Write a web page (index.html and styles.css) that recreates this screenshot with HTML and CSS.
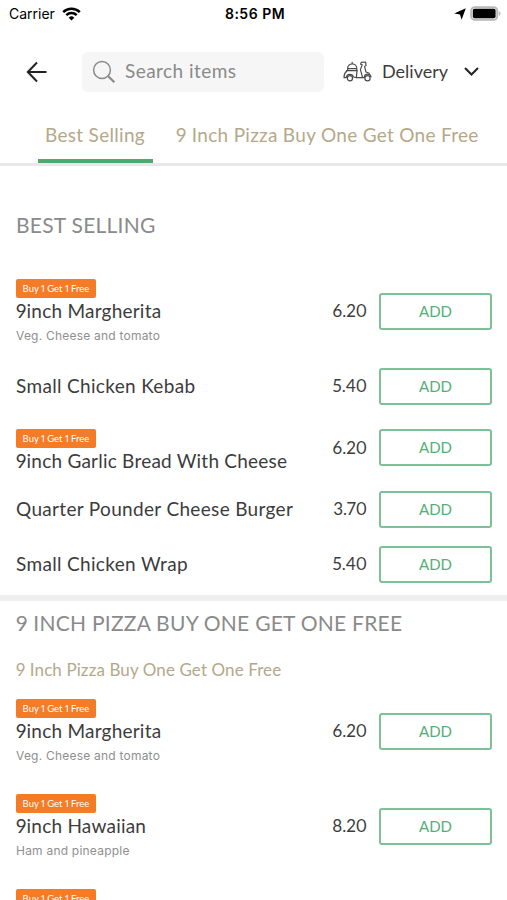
FILE: index.html
```html
<!DOCTYPE html>
<html lang="en">
<head>
    <meta charset="UTF-8">
    <meta name="viewport" content="width=device-width, initial-scale=1.0">
    <title>Menu</title>
    <link rel="stylesheet" href="styles.css">
</head>
<body>
    <div class="screen">
        <div class="status-bar">
            <div class="carrier">
                <span>Carrier</span>
                <svg width="19" height="14" viewBox="0 0 19 14">
                    <path d="M9.5 13.6 6.7 10.7a4 4 0 0 1 5.6 0z" fill="#000"/>
                    <path d="M4.3 8.2a7.4 7.4 0 0 1 10.4 0" fill="none" stroke="#000" stroke-width="2.5"/>
                    <path d="M1.2 5.1a11.8 11.8 0 0 1 16.6 0" fill="none" stroke="#000" stroke-width="2.5"/>
                </svg>
            </div>
            <div class="time">8:56 PM</div>
            <div class="indicators">
                <svg width="12" height="12" viewBox="0 0 12 12"><path d="M11.8.2 7.6 11.8 6 6.4.2 5.4z" fill="#000"/></svg>
                <svg width="31" height="15" viewBox="0 0 31 15">
                    <rect x="1.2" y="1.2" width="26" height="12.6" rx="3.6" fill="#fff" stroke="#b8b8b8" stroke-width="2"/>
                    <rect x="2.8" y="2.8" width="22.8" height="9.4" rx="1.8" fill="#000"/>
                    <path d="M28.8 5v5q1.7-.8 1.7-2.5T28.8 5z" fill="#b8b8b8"/>
                </svg>
            </div>
        </div>

        <div class="header">
            <a class="back" href="#">
                <svg width="22" height="22" viewBox="0 0 22 22"><path d="M20.5 11H2M11 1.5 1.8 11l9.2 9.5" fill="none" stroke="#222" stroke-width="2"/></svg>
            </a>
            <div class="search">
                <svg width="24" height="24" viewBox="0 0 24 24" fill="none" stroke="#8a8a8a">
                    <circle cx="10" cy="10" r="8.4" stroke-width="1.5"/>
                    <path d="m16.2 16.2 6.2 6" stroke-width="2.2"/>
                </svg>
                <span>Search items</span>
            </div>
            <div class="delivery">
                <svg width="29" height="21" viewBox="0 0 29 21" fill="none" stroke="#4a4a4a" stroke-width="1.2" stroke-linejoin="round" stroke-linecap="round">
                    <path d="M4.6 9.6V7.4a4.6 4.6 0 0 1 9.2 0v2.2M9.2 2.8V1.4M4.6 7.6h9.2M3.6 9.7h10.6"/>
                    <path d="M4 9.8C2 11.4 1 13.8 1 16.6h2.2M14 9.8l-.6 6.8h6.2l-2.2-8 1.8-4.8-1.6-.6.6-1.8 4.4-.4.4 3.4-1.4 1.2 1.4 5.4 3.4 1.2"/>
                    <path d="M3.4 16c.4-1.6 1.8-2.6 3.5-2.6s3.1 1 3.5 2.6l3 .6M19.6 16.6h1.6c.2-2.2 1.6-3.4 3.4-3.4 1.6 0 3 .8 3.4 2.6"/>
                    <circle cx="6.9" cy="17.2" r="2.6"/>
                    <circle cx="24.5" cy="17.2" r="2.6"/>
                </svg>
                <span>Delivery</span>
                <svg class="chevron" width="15" height="9" viewBox="0 0 15 9"><path d="m1 1 6.5 6.5L14 1" fill="none" stroke="#222" stroke-width="2"/></svg>
            </div>
        </div>

        <div class="tabs">
            <a class="tab active" href="#">Best Selling</a>
            <a class="tab" href="#">9 Inch Pizza Buy One Get One Free</a>
        </div>

        <div class="section">
            <h2>BEST SELLING</h2>
            <div class="item promo detailed">
                <div class="info">
                    <span class="badge">Buy 1 Get 1 Free</span>
                    <div class="name">9inch Margherita</div>
                    <div class="desc">Veg. Cheese and tomato</div>
                </div>
                <div class="price">6.20</div>
                <button>ADD</button>
            </div>
            <div class="item">
                <div class="info">
                    <div class="name">Small Chicken Kebab</div>
                </div>
                <div class="price">5.40</div>
                <button>ADD</button>
            </div>
            <div class="item promo">
                <div class="info">
                    <span class="badge">Buy 1 Get 1 Free</span>
                    <div class="name">9inch Garlic Bread With Cheese</div>
                </div>
                <div class="price">6.20</div>
                <button>ADD</button>
            </div>
            <div class="item">
                <div class="info">
                    <div class="name">Quarter Pounder Cheese Burger</div>
                </div>
                <div class="price">3.70</div>
                <button>ADD</button>
            </div>
            <div class="item">
                <div class="info">
                    <div class="name">Small Chicken Wrap</div>
                </div>
                <div class="price">5.40</div>
                <button>ADD</button>
            </div>
        </div>

        <div class="section pizza">
            <h2>9 INCH PIZZA BUY ONE GET ONE FREE</h2>
            <h3>9 Inch Pizza Buy One Get One Free</h3>
            <div class="item promo detailed">
                <div class="info">
                    <span class="badge">Buy 1 Get 1 Free</span>
                    <div class="name">9inch Margherita</div>
                    <div class="desc">Veg. Cheese and tomato</div>
                </div>
                <div class="price">6.20</div>
                <button>ADD</button>
            </div>
            <div class="item promo detailed">
                <div class="info">
                    <span class="badge">Buy 1 Get 1 Free</span>
                    <div class="name">9inch Hawaiian</div>
                    <div class="desc">Ham and pineapple</div>
                </div>
                <div class="price">8.20</div>
                <button>ADD</button>
            </div>
            <div class="item promo">
                <div class="info">
                    <span class="badge">Buy 1 Get 1 Free</span>
                </div>
            </div>
        </div>
    </div>
</body>
</html>
```
FILE: styles.css
```css
* {
    box-sizing: border-box;
}

body {
    margin: 0;
    background: #fff;
    color: #3c3c3c;
    font-family: Lato, sans-serif;
    font-variant-numeric: proportional-nums;
}

a {
    color: inherit;
    text-decoration: none;
}

svg {
    display: block;
    flex: none;
}

.screen {
    width: 507px;
    height: 900px;
    overflow: hidden;
    white-space: nowrap;
}

/* status bar */
.status-bar {
    display: grid;
    grid-template-columns: 1fr auto 1fr;
    align-items: center;
    height: 27px;
    padding: 0 6px 0 9px;
    font-family: Inter, sans-serif;
    font-size: 14px;
    color: #000;
}

.carrier,
.indicators {
    display: flex;
    align-items: center;
    gap: 7px;
}

.time {
    font-weight: 600;
    letter-spacing: 0.5px;
}

.indicators {
    justify-content: flex-end;
    gap: 4px;
}

/* header */
.header {
    display: flex;
    align-items: center;
    height: 89px;
    padding: 0 28px 0 26px;
}

.back {
    width: 56px;
}

.search {
    display: flex;
    align-items: center;
    gap: 9px;
    width: 242px;
    height: 40px;
    padding-left: 10px;
    border-radius: 6px;
    background: #f6f6f6;
    color: #8a8a8a;
    font-size: 19px;
    letter-spacing: 0.45px;
}

.search span,
.delivery span {
    padding-bottom: 2px;
}

.delivery {
    display: flex;
    align-items: center;
    flex: 1;
    gap: 10px;
    margin-left: 19px;
    font-size: 18px;
}

.chevron {
    margin-left: auto;
}

/* category tabs */
.tabs {
    display: flex;
    gap: 15px;
    height: 50px;
    padding-left: 38px;
    border-bottom: 3px solid #e8e8e8;
    color: #b5a88a;
    font-size: 19px;
    line-height: 38px;
    letter-spacing: 0.3px;
}

.tab {
    height: 47px;
    padding: 0 8px;
}

.tab.active {
    width: 115px;
    padding: 0 7px;
    border-bottom: 4px solid #4caa70;
}

/* menu */
.section {
    padding: 45px 15px 3.5px 16px;
    border-bottom: 6px solid #eee;
}

h2 {
    margin: 0 0 24.5px;
    color: #8a8a8a;
    font-size: 21px;
    font-weight: 400;
    line-height: 28px;
    letter-spacing: 0.25px;
}

h3 {
    margin: 0 0 1.5px;
    color: #b5a88a;
    font-size: 17px;
    font-weight: 400;
    line-height: 24px;
    letter-spacing: 0.1px;
}

.pizza {
    padding-top: 8px;
}

.pizza h2 {
    margin-bottom: 21px;
}

.item {
    display: flex;
    align-items: center;
    height: 55px;
}

.item.promo {
    height: 68px;
}

.item.promo .info {
    align-self: flex-start;
    padding-top: 15.5px;
}

.item.detailed {
    height: 95px;
}

.info {
    flex: 1;
}

.badge {
    display: block;
    width: 80px;
    height: 19px;
    border-radius: 2px;
    background: #f57c26;
    color: #fff;
    font-size: 9.5px;
    line-height: 19px;
    text-align: center;
}

.name {
    font-size: 19px;
    line-height: 26px;
    letter-spacing: 0.33px;
}

.promo .name {
    letter-spacing: 0.22px;
}

.desc {
    margin-top: 4px;
    color: #8f8f8f;
    font-family: Inter, sans-serif;
    font-size: 12px;
    line-height: 16px;
    letter-spacing: 0.22px;
}

.price {
    margin-right: 12px;
    padding-bottom: 1px;
    font-size: 17px;
}

button {
    width: 113px;
    height: 37px;
    padding: 0 0 1px;
    border: 2px solid #7cc197;
    border-radius: 3px;
    background: #fff;
    color: #55ae78;
    font-family: inherit;
    font-size: 15px;
}
```
